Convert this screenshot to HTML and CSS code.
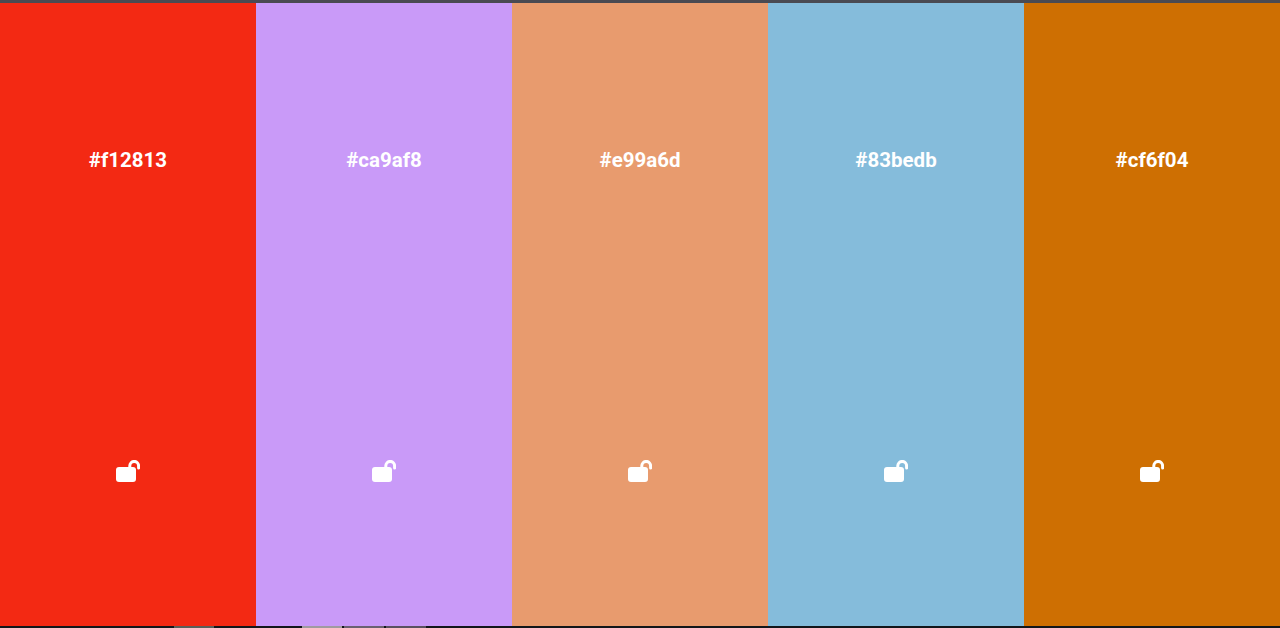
FILE: index.html
```html
<!DOCTYPE html>
<html lang="en">
<head>
    <meta charset="UTF-8">
    <title>Palette</title>
    <link rel="stylesheet" href="styles.css">
</head>
<body>
    <div class="top-strip"></div>

    <main class="palette">
        <section class="swatch swatch-red">
            <h2 class="hex">#f12813</h2>
            <button class="lock" aria-label="Lock colour">
                <svg viewBox="0 0 24 22" width="24" height="22"><rect x="0" y="7" width="20" height="15" rx="3" fill="currentColor"/><path d="M13.8 9V5.8a4.4 4.4 0 0 1 8.8 0V8" fill="none" stroke="currentColor" stroke-width="3" stroke-linecap="round"/></svg>
            </button>
        </section>
        <section class="swatch swatch-purple">
            <h2 class="hex">#ca9af8</h2>
            <button class="lock" aria-label="Lock colour">
                <svg viewBox="0 0 24 22" width="24" height="22"><rect x="0" y="7" width="20" height="15" rx="3" fill="currentColor"/><path d="M13.8 9V5.8a4.4 4.4 0 0 1 8.8 0V8" fill="none" stroke="currentColor" stroke-width="3" stroke-linecap="round"/></svg>
            </button>
        </section>
        <section class="swatch swatch-peach">
            <h2 class="hex">#e99a6d</h2>
            <button class="lock" aria-label="Lock colour">
                <svg viewBox="0 0 24 22" width="24" height="22"><rect x="0" y="7" width="20" height="15" rx="3" fill="currentColor"/><path d="M13.8 9V5.8a4.4 4.4 0 0 1 8.8 0V8" fill="none" stroke="currentColor" stroke-width="3" stroke-linecap="round"/></svg>
            </button>
        </section>
        <section class="swatch swatch-blue">
            <h2 class="hex">#83bedb</h2>
            <button class="lock" aria-label="Lock colour">
                <svg viewBox="0 0 24 22" width="24" height="22"><rect x="0" y="7" width="20" height="15" rx="3" fill="currentColor"/><path d="M13.8 9V5.8a4.4 4.4 0 0 1 8.8 0V8" fill="none" stroke="currentColor" stroke-width="3" stroke-linecap="round"/></svg>
            </button>
        </section>
        <section class="swatch swatch-orange">
            <h2 class="hex">#cf6f04</h2>
            <button class="lock" aria-label="Lock colour">
                <svg viewBox="0 0 24 22" width="24" height="22"><rect x="0" y="7" width="20" height="15" rx="3" fill="currentColor"/><path d="M13.8 9V5.8a4.4 4.4 0 0 1 8.8 0V8" fill="none" stroke="currentColor" stroke-width="3" stroke-linecap="round"/></svg>
            </button>
        </section>
    </main>

    <div class="bottom-strip">
        <span class="tab tab-first"></span>
        <span class="tab tab-active"></span>
        <span class="tab tab-mid"></span>
        <span class="tab tab-last"></span>
    </div>
</body>
</html>
```

FILE: styles.css
```css
html, body {
    height: 100%;
}

body {
    margin: 0;
    display: flex;
    flex-direction: column;
    overflow: hidden;
    font-family: Roboto, sans-serif;
    color: #fff;
}

.top-strip {
    height: 3px;
    background-color: #4a4a52;
}

.bottom-strip {
    height: 2px;
    display: flex;
    gap: 2px;
    padding-left: 174px;
    background-color: #12161a;
}

.tab {
    width: 40px;
}

.tab-first {
    background-color: #5a5f5a;
    margin-right: 86px;
}

.tab-active {
    background-color: #a09aa0;
}

.tab-mid {
    background-color: #6a6070;
}

.tab-last {
    background-color: #5a5060;
}

.palette {
    flex: 1;
    display: grid;
    grid-template-columns: repeat(5, 1fr);
}

.swatch {
    display: flex;
    flex-direction: column;
    align-items: center;
    justify-content: space-around;
    padding-top: 1px;
}

.swatch-red {
    background-color: #f32913;
}

.swatch-purple {
    background-color: #c99af8;
}

.swatch-peach {
    background-color: #e89b6e;
}

.swatch-blue {
    background-color: #85bcdb;
}

.swatch-orange {
    background-color: #ce6f02;
}

.hex {
    margin: 0;
    font-size: 20.5px;
    font-weight: 700;
}

.lock {
    display: flex;
    padding: 0;
    border: none;
    background: none;
    color: inherit;
    cursor: pointer;
}
```
